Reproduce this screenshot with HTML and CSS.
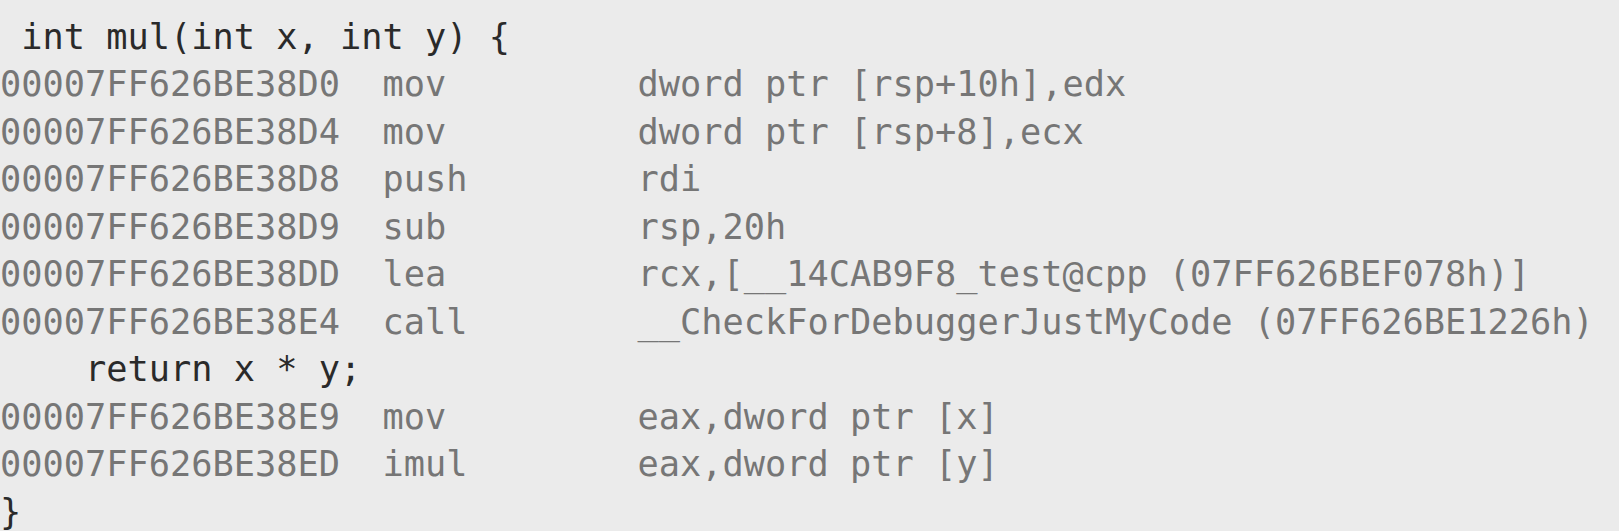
FILE: index.html
```html
<!DOCTYPE html>
<html lang="en">
<head>
<meta charset="utf-8">
<title>Disassembly</title>
<link rel="stylesheet" href="styles.css">
</head>
<body>
<div class="listing">
<div class="line src"> int mul(int x, int y) {</div>
<div class="line asm">00007FF626BE38D0  mov         dword ptr [rsp+10h],edx</div>
<div class="line asm">00007FF626BE38D4  mov         dword ptr [rsp+8],ecx</div>
<div class="line asm">00007FF626BE38D8  push        rdi</div>
<div class="line asm">00007FF626BE38D9  sub         rsp,20h</div>
<div class="line asm">00007FF626BE38DD  lea         rcx,[__14CAB9F8_test@cpp (07FF626BEF078h)]</div>
<div class="line asm">00007FF626BE38E4  call        __CheckForDebuggerJustMyCode (07FF626BE1226h)</div>
<div class="line src">    return x * y;</div>
<div class="line asm">00007FF626BE38E9  mov         eax,dword ptr [x]</div>
<div class="line asm">00007FF626BE38ED  imul        eax,dword ptr [y]</div>
<div class="line src">}</div>
</div>
</body>
</html>
```
FILE: styles.css
```css
html, body {
  margin: 0;
  padding: 0;
  background: #ebebeb;
}
body {
  overflow: hidden;
}
.listing {
  padding: 13px 0 0 0;
  font-family: "DejaVu Sans Mono", "Liberation Mono", monospace;
  font-size: 35.3px;
  line-height: 47.45px;
}
.line {
  white-space: pre;
}
.src {
  color: #2a2a2a;
}
.asm {
  color: #767676;
}
```
